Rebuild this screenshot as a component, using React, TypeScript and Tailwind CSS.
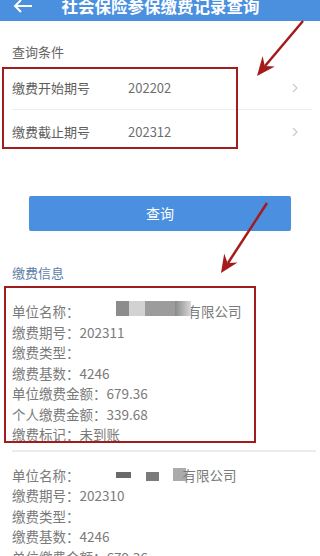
import React from 'react';

const font = { fontFamily: '"Noto Sans CJK SC", "Noto Sans", sans-serif' };

type Rec = { period: string; blur: 'a' | 'b' };

function BlurA() {
  return (
    <span className="inline-flex items-center h-[15px] -translate-y-[3px] align-middle ml-[36px]">
      <span className="w-[13px] h-[15px] bg-[#8c8c8c]" />
      <span className="w-[16px] h-[15px] bg-[#d2d2d2]" />
      <span className="w-[30px] h-[15px] bg-[#9c9c9c]" />
      <span className="w-[16px] h-[15px] bg-gradient-to-r from-[#8a8a8a] to-[#d8d8d8]" />
    </span>
  );
}

function BlurB() {
  return (
    <span className="inline-flex items-center h-[15px] align-middle ml-[36px]">
      <span className="w-[15px] h-[6px] bg-[#6a6a6a]" />
      <span className="w-[15px]" />
      <span className="w-[13px] h-[9px] bg-[#7b7b7b] translate-y-[2px]" />
      <span className="w-[14px]" />
      <span className="w-[13px] h-[13px] bg-[#ababab]" />
    </span>
  );
}

function Record({ period, blur }: Rec) {
  const rows: [string, string][] = [
    ['缴费期号：', period],
    ['缴费类型：', ''],
    ['缴费基数：', '4246'],
    ['单位缴费金额：', '679.36'],
    ['个人缴费金额：', '339.68'],
    ['缴费标记：', '未到账'],
  ];
  return (
    <div className="pl-3 text-[13.5px] leading-[20.5px] text-[#7a7a7a]">
      <div className="flex items-center whitespace-nowrap">
        <span>单位名称：</span>
        {blur === 'a' ? <BlurA /> : <BlurB />}
        <span className="ml-[-3px]">有限公司</span>
      </div>
      {rows.map(([k, v]) => (
        <div key={k} className="whitespace-nowrap">
          {k}
          {v}
        </div>
      ))}
    </div>
  );
}

function Chevron() {
  return (
    <svg width="6" height="10" viewBox="0 0 6 10" className="mr-[14px]">
      <polyline points="1,1 5,5 1,9" fill="none" stroke="#c9c9c9" strokeWidth="1.2" />
    </svg>
  );
}

export default function App() {
  return (
    <div className="relative w-[320px] h-[556px] overflow-hidden bg-white" style={font}>
      {/* header, top of it is cut off in the shot */}
      <div className="h-[21px] bg-[#4b8fdf] overflow-hidden flex items-start relative">
        <svg width="20" height="14" viewBox="0 0 20 14" className="absolute left-[13px] top-[-1px]">
          <path d="M19 7H2M8 1L2 7l6 6" fill="none" stroke="white" strokeWidth="2" />
        </svg>
        <div className="w-full text-center text-white font-bold text-[16.5px] leading-[17px] mt-[-2px] pl-[1px]">
          社会保险参保缴费记录查询
        </div>
      </div>

      <div className="pl-3 pt-[22px] pb-[6px] text-[13px] leading-[18px] text-[#666]">查询条件</div>

      <div className="pl-3">
        <div className="h-[43px] flex items-center border-b border-[#eeeeee] mr-2">
          <span className="w-[116px] text-[13px] text-[#5e5e5e]">缴费开始期号</span>
          <span className="flex-1 text-[13px] text-[#6e6e6e]">202202</span>
          <Chevron />
        </div>
        <div className="h-[43px] flex items-center mr-2">
          <span className="w-[116px] text-[13px] text-[#5e5e5e]">缴费截止期号</span>
          <span className="flex-1 text-[13px] text-[#6e6e6e]">202312</span>
          <Chevron />
        </div>
      </div>

      <div className="px-[29px] mt-[43px]">
        <button
          type="button"
          className="w-full h-[35px] rounded-[2px] bg-[#4a8fe0] text-white text-[14px]"
        >
          查询
        </button>
      </div>

      <div className="pl-3 mt-[33px] text-[13px] leading-[18px] text-[#5b7ea8]">缴费信息</div>

      <div className="pt-[19px] pb-[5px]">
        <Record period="202311" blur="a" />
      </div>
      <div className="ml-3 mr-1 h-[2px] bg-[#ececec]" />
      <div className="pt-[13px]">
        <Record period="202310" blur="b" />
      </div>

      {/* annotation overlays */}
      <div className="absolute left-[2px] top-[67px] w-[236px] h-[82px] border-[2.5px] border-[#a11c1c]" />
      <div className="absolute left-[4px] top-[286px] w-[252px] h-[157px] border-[2.5px] border-[#a11c1c]" />
      <svg width="320" height="556" className="absolute left-0 top-0 pointer-events-none">
        <line x1="303" y1="21" x2="265" y2="66" stroke="#a51b1b" strokeWidth="2.5" />
        <polygon points="257,76 262.6,56 264.8,66 274.8,66.5" fill="#a51b1b" />
        <line x1="267" y1="203" x2="228" y2="263" stroke="#a51b1b" strokeWidth="2.5" />
        <polygon points="221,273 224.2,253.6 227.6,263 237.6,262.4" fill="#a51b1b" />
      </svg>
    </div>
  );
}
